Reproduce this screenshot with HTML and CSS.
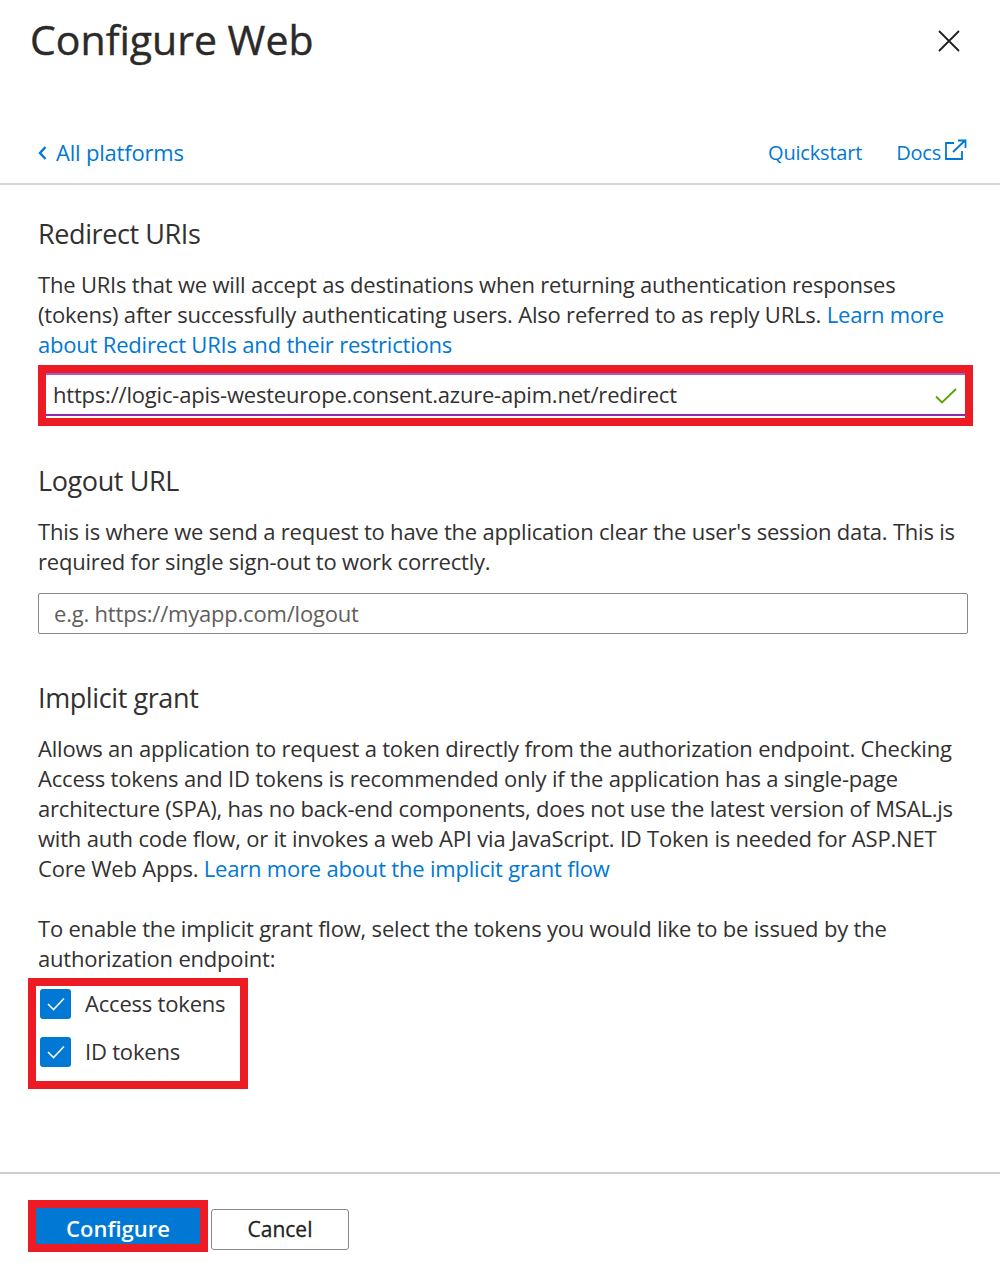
FILE: index.html
```html
<!DOCTYPE html>
<html lang="en">
<head>
<meta charset="utf-8">
<title>Configure Web</title>
<link rel="stylesheet" href="styles.css">
</head>
<body>
<div class="panel">
  <header class="head">
    <h1 class="title">Configure Web</h1>
    <button class="close" aria-label="Close">
      <svg width="22" height="22" viewBox="0 0 22 22"><path d="M1 1 L21 21 M21 1 L1 21" stroke="#201f1e" stroke-width="1.8" fill="none"/></svg>
    </button>
  </header>
  <nav class="nav">
    <a class="back" href="#">
      <svg width="9" height="14" viewBox="0 0 9 14"><path d="M7.5 1 L2 7 L7.5 13" stroke="#0078d4" stroke-width="2.4" fill="none"/></svg>
      <span>All platforms</span>
    </a>
    <div class="navlinks">
      <a href="#" class="navlink">Quickstart</a>
      <a href="#" class="navlink docs">Docs<svg width="24" height="22" viewBox="0 0 24 22"><path d="M10 4 H2 V20 H18 V12" stroke="#0078d4" stroke-width="1.8" fill="none"/><path d="M9 13 L21 1.5 M14 1.5 H21.5 V9" stroke="#0078d4" stroke-width="1.8" fill="none"/></svg></a>
    </div>
  </nav>

  <main class="content">
    <section class="section">
      <h2 class="heading">Redirect URIs</h2>
      <p class="text">The URIs that we will accept as destinations when returning authentication responses (tokens) after successfully authenticating users. Also referred to as reply URLs. <a href="#" class="link">Learn more about Redirect URIs and their restrictions</a></p>
      <div class="annot annot-field">
        <div class="field valid">
          <span class="value">https://logic-apis-westeurope.consent.azure-apim.net/redirect</span>
          <svg class="ok" width="22" height="16" viewBox="0 0 22 16"><path d="M1 8.5 L7 14.5 L21 1" stroke="#57a300" stroke-width="1.8" fill="none"/></svg>
        </div>
      </div>
    </section>

    <section class="section">
      <h2 class="heading">Logout URL</h2>
      <p class="text">This is where we send a request to have the application clear the user's session data. This is required for single sign-out to work correctly.</p>
      <div class="field plain"><span class="placeholder">e.g. https://myapp.com/logout</span></div>
    </section>

    <section class="section">
      <h2 class="heading">Implicit grant</h2>
      <p class="text">Allows an application to request a token directly from the authorization endpoint. Checking Access tokens and ID tokens is recommended only if the application has a single-page architecture (SPA), has no back-end components, does not use the latest version of MSAL.js with auth code flow, or it invokes a web API via JavaScript. ID Token is needed for ASP.NET Core Web Apps. <a href="#" class="link">Learn more about the implicit grant flow</a></p>
      <p class="text text-gap">To enable the implicit grant flow, select the tokens you would like to be issued by the authorization endpoint:</p>
      <div class="annot annot-checks">
        <label class="check">
          <span class="box"><svg width="20" height="16" viewBox="0 0 20 16"><path d="M2 8 L7.5 13.5 L18 2.5" stroke="#fff" stroke-width="1.6" fill="none"/></svg></span>
          <span>Access tokens</span>
        </label>
        <label class="check">
          <span class="box"><svg width="20" height="16" viewBox="0 0 20 16"><path d="M2 8 L7.5 13.5 L18 2.5" stroke="#fff" stroke-width="1.6" fill="none"/></svg></span>
          <span>ID tokens</span>
        </label>
      </div>
    </section>
  </main>

  <footer class="foot">
    <div class="annot annot-btn"><button class="btn primary">Configure</button></div>
    <button class="btn secondary">Cancel</button>
  </footer>
</div>
</body>
</html>
```

FILE: styles.css
```css
* { box-sizing: border-box; }
html, body { margin: 0; padding: 0; background: #fff; }
body {
  font-family: "Segoe UI", "Open Sans", "Noto Sans", sans-serif;
  color: #323130;
  width: 1000px;
  height: 1283px;
  overflow: hidden;
}
a { color: #0078d4; text-decoration: none; }

.head {
  display: flex;
  justify-content: space-between;
  align-items: flex-start;
  padding: 11px 40px 0 30px;
}
.title {
  margin: 0;
  font-size: 41px;
  line-height: 56px;
  font-weight: 400;
  letter-spacing: 0;
  color: #2b2a29;
  -webkit-text-stroke: 0.4px #2b2a29;
}
.close {
  border: 0;
  background: none;
  padding: 0;
  margin-top: 19px;
  width: 22px;
  height: 22px;
  display: block;
}
.close svg { display: block; }

.nav {
  display: flex;
  justify-content: space-between;
  align-items: center;
  margin-top: 70px;
  height: 32px;
  padding: 0 32px 0 38px;
  margin-bottom: 14px;
}
.back {
  display: flex;
  align-items: center;
  gap: 9px;
  font-size: 22px;
  letter-spacing: -0.2px;
}
.back span { margin-top: -2px; }
.back svg { display: block; margin-top: 0; }
.navlinks { display: flex; align-items: center; gap: 34px; margin-top: -2px; }
.navlink { font-size: 20px; letter-spacing: -0.2px; display: flex; align-items: center; }
.docs svg { display: block; margin-left: 3px; margin-top: -4px; }

.content {
  border-top: 2px solid #d6d4d2;
  padding: 31px 32px 0 38px;
}
.heading {
  margin: 0;
  font-size: 27px;
  line-height: 36px;
  font-weight: 400;
  letter-spacing: -0.4px;
  color: #323130;
}
.text {
  margin: 17px 0 0;
  font-size: 22px;
  line-height: 30px;
  letter-spacing: -0.2px;
}
.text-gap { margin-top: 30px; }
.link { color: #0078d4; }

.annot { border: 8px solid #ed1c24; }
.annot-field {
  margin-top: 6px;
  width: 935px;
  height: 61px;
}
.field {
  display: flex;
  align-items: center;
  justify-content: space-between;
  font-size: 22px;
  letter-spacing: -0.2px;
}
.field.valid {
  height: 43px;
  border-top: 2px solid #a15fcb;
  border-bottom: 2px solid #8e2bb0;
  padding: 0 8px 0 7px;
  background: #fff;
}
.value { margin-top: -2px; }
.ok { display: block; margin-top: 2px; }
.field.plain {
  margin-top: 17px;
  width: 930px;
  height: 41px;
  border: 1px solid #8a8886;
  border-radius: 2px;
  padding: 0 15px;
}
.placeholder { color: #605e5c; margin-top: -2px; }

.section + .section { margin-top: 37px; }
.section:last-child { margin-top: 46px; }

.annot-checks {
  margin: 5px 0 0 -10px;
  width: 220px;
  height: 111px;
  padding: 3px 0 0 4px;
  display: flex;
  flex-direction: column;
  gap: 18px;
}
.check {
  display: flex;
  align-items: center;
  gap: 14px;
  height: 30px;
  font-size: 22px;
  letter-spacing: -0.2px;
}
.check > span:last-child { margin-top: -2px; }
.box {
  width: 31px;
  height: 30px;
  border-radius: 3px;
  background: #0078d4;
  display: flex;
  align-items: center;
  justify-content: center;
}
.box svg { display: block; }

.foot {
  margin-top: 83px;
  border-top: 2px solid #cfcdcb;
  padding: 26px 0 0 28px;
  display: flex;
  align-items: flex-start;
}
.annot-btn { width: 180px; height: 52px; }
.btn {
  font-family: inherit;
  font-weight: 600;
  cursor: pointer;
}
.btn.primary {
  width: 100%;
  height: 100%;
  border: 0;
  background: #0078d4;
  color: #fff;
  font-size: 22px;
  padding: 3px 0 0;
}
.btn.secondary {
  margin: 9px 0 0 3px;
  width: 138px;
  height: 41px;
  border: 1px solid #8a8886;
  border-radius: 3px;
  background: #fff;
  color: #201f1e;
  font-size: 21px;
  font-weight: 400;
  -webkit-text-stroke: 0.3px #201f1e;
  padding: 0 0 2px;
}
```
